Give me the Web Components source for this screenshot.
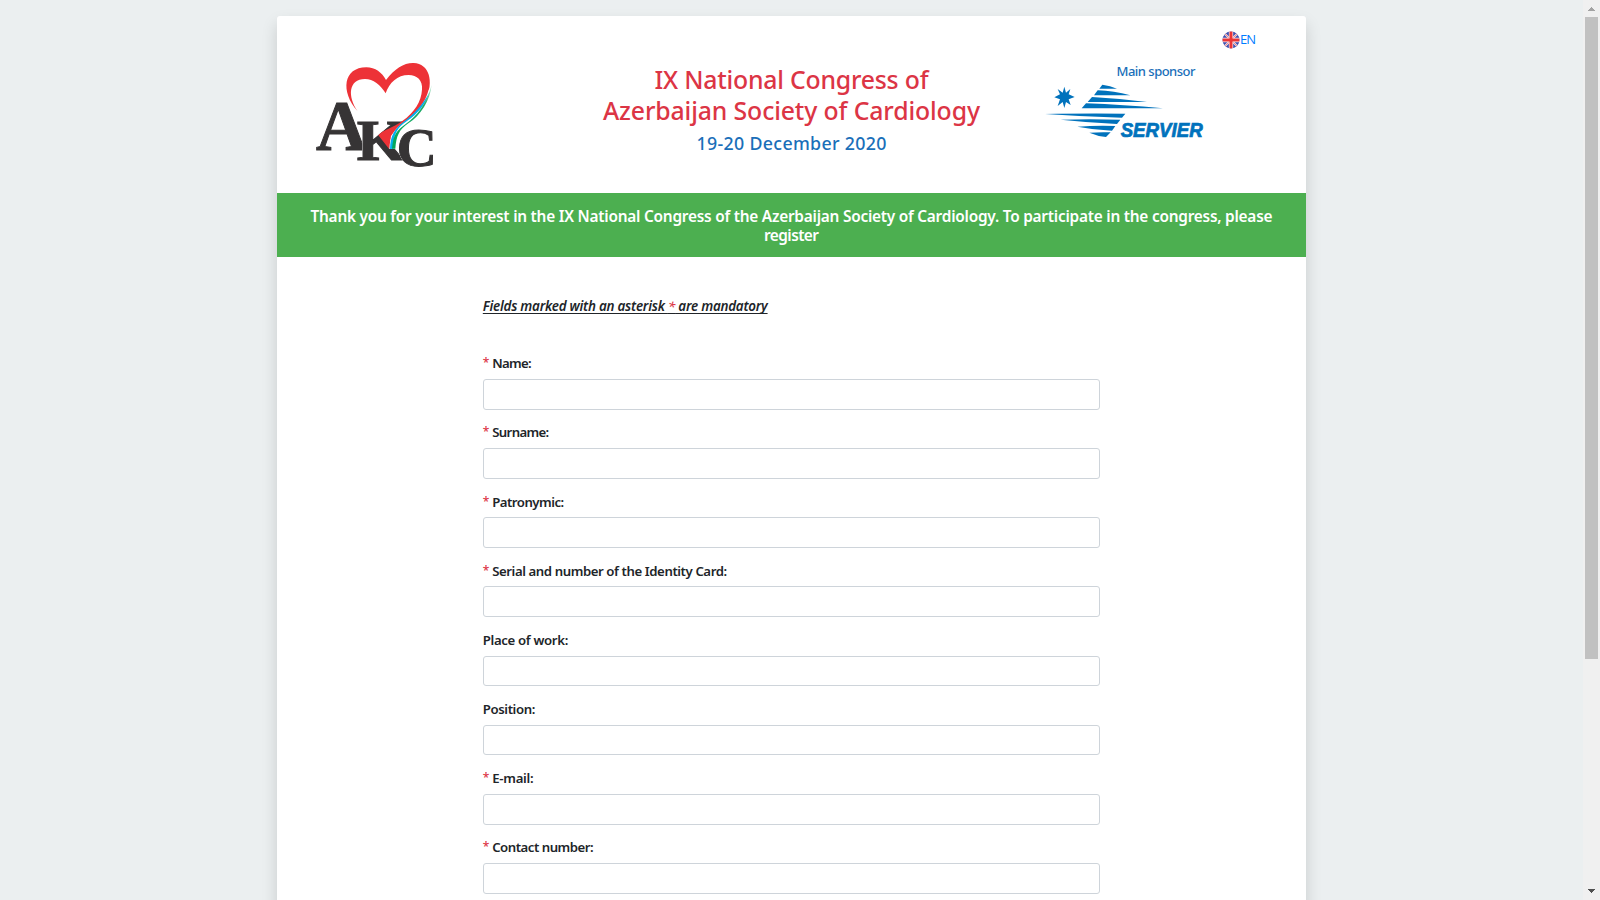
<!DOCTYPE html>
<html lang="en">
<head>
<meta charset="utf-8">
<title>IX National Congress of Azerbaijan Society of Cardiology</title>
<style>
html,body{margin:0;height:100%;overflow:hidden}
body{background:#ebeff0;color:#212529;font-family:"Noto Sans","Open Sans",sans-serif}
</style>
</head>
<body>
<congress-page></congress-page>
<script>
const define = (name, html, ready) => {
  const t = document.createElement('template');
  t.innerHTML = html;
  customElements.define(name, class extends HTMLElement {
    connectedCallback() {
      if (this.shadowRoot) return;
      this.attachShadow({mode: 'open'}).append(t.content.cloneNode(true));
      if (ready) ready(this, this.shadowRoot);
    }
  });
};

// One line of text, tracked so that it fills the width given in pixels.
define('fit-text', `<style>:host{display:inline-block;white-space:nowrap;text-align:left}span{display:inline-block}:host([underline]) span{text-decoration:underline 1px;text-underline-offset:1.5px;text-decoration-skip-ink:none}</style><span><slot></slot></span>`,
  (el, root) => {
    const span = root.querySelector('span'), w = +el.getAttribute('width');
    const n = el.textContent.length;
    const natural = span.getBoundingClientRect().width;
    span.style.letterSpacing = ((w - natural) / (n - 1)) + 'px';
    el.style.width = w + 'px';
  });

define('akc-logo', `<style>:host{display:block;width:150px;height:130px}svg{display:block}text{font-family:"Liberation Serif",serif;font-weight:700;fill:#363435;stroke:#363435;stroke-width:3;filter:drop-shadow(0 0 1.5px #fff) drop-shadow(0 0 1px #fff)}</style>
<svg width="150" height="130" viewBox="0 0 450 390">
<text x="48" y="299" font-size="213" textLength="154" lengthAdjust="spacingAndGlyphs">A</text>
<text x="170" y="331" font-size="173" textLength="146" lengthAdjust="spacingAndGlyphs">K</text>
<path d="M173 184C120 125 130 52 199 52C226 52 246 68 258 90C285 55 312 38 341 39C388 41 402 93 378 149C353 207 303 216 273 258L268 298L235 256C246 241 282 232 307 213C344 186 364 154 366 119C369 91 351 75 326 75C292 75 268 98 257 130C241 104 220 87 195 87C145 88 142 139 173 184Z" fill="#ed3237"/>
<path d="M395 104C389 153 359 192 326 215C297 236 289 252 286 296L268 297C270 258 282 238 310 218C349 191 376 158 386 119Z" fill="#fff"/>
<path d="M389 126C378 161 352 193 320 214C290 235 281 251 280 296L270 297C271 257 284 236 310 216C345 190 371 160 389 126Z" fill="#00afef"/>
<path d="M395 104C391 151 361 197 326 219C297 239 289 257 286 296L276 296C280 256 288 242 317 222C352 196 379 163 395 104Z" fill="url(#g)"/>
<defs><linearGradient id="g" x1="0" y1="0" x2="0" y2="1"><stop offset="0" stop-color="#d8f2e4"/><stop offset=".3" stop-color="#20aa68"/><stop offset="1" stop-color="#00a859"/></linearGradient></defs>
<text x="290" y="349" font-size="165" textLength="120" lengthAdjust="spacingAndGlyphs">C</text>
</svg>`);

define('servier-logo', `<style>:host{display:block;width:170px;height:60px}svg{display:block}text{font:italic 700 59px "Liberation Sans",sans-serif;stroke:#0072bc;stroke-width:2.2}</style>
<svg width="170" height="60" viewBox="40 190 510 180" fill="#0072bc">
<path d="M218 195Q242 198 262 207H209Z"/>
<path d="M204 212Q252 214 302 227H193Z"/>
<path d="M187 232Q270 236 352 247H174Z"/>
<path d="M169 251Q280 255 400 266H156Z"/>
<path d="M46 283Q150 281 287 282L277 294Q160 291 46 283Z"/>
<path d="M93 300Q180 298 272 300L262 313Q180 309 93 300Z"/>
<path d="M143 321Q200 317 257 319L247 333Q195 331 143 321Z"/>
<path d="M179 339Q210 337 243 338L229 352Q205 350 179 339Z"/>
<path d="M104 201L109 219L122 208L117 224L135 232L117 239L123 256L109 247L104 265L99 247L84 259L91 239L74 233L91 224L84 208L99 219Z"/>
<text x="273" y="353" textLength="246" lengthAdjust="spacingAndGlyphs">SERVIER</text>
</svg>`);

define('lang-link', `<style>:host{display:flex;align-items:center;font-size:13px;line-height:18px;color:#007bff}svg{display:block}fit-text{font-family:"Open Sans","Noto Sans",sans-serif;position:relative;top:-1px}</style>
<svg width="18" height="18" viewBox="0 0 54 54"><defs><clipPath id="c"><circle cx="27" cy="27" r="25.5"/></clipPath></defs>
<g clip-path="url(#c)"><path fill="#3f4fae" d="M0 0h54v54H0z"/><path d="M3 3L51 51M51 3L3 51" stroke="#f3dfe6" stroke-width="6"/><path d="M5 5L49 49M49 5L5 49" stroke="#e8898d" stroke-width="3"/><path d="M27 0V54M0 27H54" stroke="#faf4f6" stroke-width="13"/><path d="M27 0V54M0 27H54" stroke="#ea3536" stroke-width="9"/></g></svg>
<fit-text width="16">EN</fit-text>`);

define('page-header', `<style>
:host{display:grid;grid-template-columns:267px 1fr 267px;height:177px;box-sizing:border-box}
akc-logo{margin:34px 0 0 23px}
.title{text-align:center;font-weight:500;padding-top:47.6px}
.title div{height:31px;font-size:24.8px;line-height:31px;color:#dc3545}
.title .date{height:24px;margin-top:5.6px;font-size:17.8px;line-height:24px;color:#1a6fb9}
lang-link{margin:15px 0 0 183px;height:18px}
.sponsor{font-size:13px;line-height:18px;height:18px;font-weight:500;color:#1a6fb9;margin:13px 0 0 77.5px}
servier-logo{margin-top:3.3px;margin-left:4.3px}
</style>
<akc-logo></akc-logo>
<div class="title"><div><fit-text width="274">IX National Congress of</fit-text></div><div><fit-text width="377">Azerbaijan Society of Cardiology</fit-text></div><div class="date"><fit-text width="190">19-20 December 2020</fit-text></div></div>
<div><lang-link></lang-link><div class="sponsor"><fit-text width="79">Main sponsor</fit-text></div><servier-logo></servier-logo></div>`);

define('thank-banner', `<style>:host{display:block;height:64px;box-sizing:border-box;padding-top:14.3px;background:#4caf50;color:#fff;text-align:center;font-weight:600;font-size:15.4px;line-height:19px}div{height:19px}</style>
<div><fit-text width="962">Thank you for your interest in the IX National Congress of the Azerbaijan Society of Cardiology. To participate in the congress, please</fit-text></div><div><fit-text width="55">register</fit-text></div>`);

define('form-field', `<style>
:host{display:block;height:57.2px;font-size:13.2px;font-weight:600;line-height:20px}
.label{display:flex;height:20px;padding-top:.6px}
.star{display:none;color:#dc3545;font-weight:500;font-size:12px;width:9.4px}
:host([required]) .star{display:block}
input{display:block;box-sizing:border-box;width:100%;height:30.8px;margin:5.6px 0 0;border:1px solid #ced4da;border-radius:3px;background:#fff;outline:0}
</style><div class="label"><span class="star">*</span><slot></slot></div><input type="text">`);

define('registration-form', `<style>
:host{display:block;width:617.4px;margin:0 auto;padding-top:38.7px}
.note{height:20px;font-size:13.4px;font-weight:600;font-style:italic;line-height:20px}
b{color:#dc3545;font-weight:500}
.fields{display:grid;row-gap:11.97px;padding-top:37px}
</style>
<div class="note"><fit-text underline width="285">Fields marked with an asterisk <b>*</b> are mandatory</fit-text></div>
<div class="fields">
<form-field required><fit-text width="39.5">Name:</fit-text></form-field>
<form-field required><fit-text width="57">Surname:</fit-text></form-field>
<form-field required><fit-text width="72">Patronymic:</fit-text></form-field>
<form-field required><fit-text width="235">Serial and number of the Identity Card:</fit-text></form-field>
<form-field><fit-text width="85.5">Place of work:</fit-text></form-field>
<form-field><fit-text width="52.5">Position:</fit-text></form-field>
<form-field required><fit-text width="41.5">E-mail:</fit-text></form-field>
<form-field required><fit-text width="101.5">Contact number:</fit-text></form-field>
</div>`);

define('scroll-rail', `<style>:host{display:flex;flex-direction:column;width:17px;height:900px;background:#f0f0f0}
svg{display:block;flex:none}.thumb{height:642px;width:13px;margin-left:2px;background:#c1c1c1}.gap{flex:1}</style>
<svg width="17" height="17" shape-rendering="crispEdges" fill="#a3a3a3"><path d="M8 7h1v1h1v1h1v1h1v1H5v-1h1v-1h1v-1h1z"/></svg><div class="thumb"></div><div class="gap"></div>
<svg width="17" height="17" shape-rendering="crispEdges" fill="#505050"><path d="M5 6h7v1h-1v1h-1v1H9v1H8V9H7V8H6V7H5z"/></svg>`);

define('congress-page', `<style>
:host{display:flex;height:900px;overflow:hidden}
main{flex:1;padding-top:16px}
section{width:1029px;margin:0 auto;height:1300px;background:#fff;border-radius:3px 3px 0 0;box-shadow:0 8px 16px rgba(0,0,0,.15)}
</style>
<main><section><page-header></page-header><thank-banner></thank-banner><registration-form></registration-form></section></main><scroll-rail></scroll-rail>`);
</script>
</body>
</html>
